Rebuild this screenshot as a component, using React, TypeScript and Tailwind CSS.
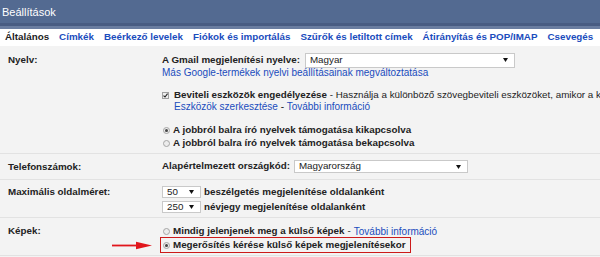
const tabs = [
  "Címkék",
  "Beérkező levelek",
  "Fiókok és importálás",
  "Szűrők és letiltott címek",
  "Átirányítás és POP/IMAP",
  "Csevegés",
];

function Radio({ checked = false }: { checked?: boolean }) {
  return (
    <span className="mr-[3px] ml-[1px] flex h-[7px] w-[7px] shrink-0 items-center justify-center rounded-full border border-[#a5a5a5] bg-[#ececec]">
      {checked && <span className="h-[3px] w-[3px] rounded-full bg-[#444]" />}
    </span>
  );
}

function Checkbox() {
  return (
    <span className="flex h-[7px] w-[7px] shrink-0 items-center justify-center border border-[#a0a0a0] bg-[#eee]">
      <svg width="5" height="5" viewBox="0 0 5 5">
        <path d="M0.5 2.6 L2 4 L4.6 0.6" fill="none" stroke="#222" strokeWidth="1.1" />
      </svg>
    </span>
  );
}

function Select({ value, className }: { value: string; className: string }) {
  return (
    <div
      className={`flex items-center justify-between border border-[#c9c9c9] bg-white pr-[6px] pl-[4px] font-normal ${className}`}
    >
      <span>{value}</span>
      <svg width="5" height="4" viewBox="0 0 5 4">
        <path d="M0 0h5L2.5 4z" fill="#111" />
      </svg>
    </div>
  );
}

export default function App() {
  return (
    <div className="h-[257px] w-[600px] overflow-hidden bg-[#f3f3f3] font-['Liberation_Sans',Arial,sans-serif] text-[9.8px] whitespace-nowrap text-[#222]">
      {/* Header */}
      <div className="h-[23px] bg-[#536a91] pt-[4px] pl-[2px] text-[11px] text-white">Beállítások</div>
      <div className="h-[3px] bg-[#485c82]" />
      <div className="h-[3px] bg-[#6a7da0]" />

      {/* Tabs */}
      <div className="flex h-[17px] items-center gap-[10px] bg-white pl-[5px] font-bold text-[#1a4cbd]">
        <span className="text-[#222]">Általános</span>
        {tabs.map((t) => (
          <span key={t}>{t}</span>
        ))}
      </div>

      {/* Nyelv */}
      <div className="flex border-b border-[#e2e2e2] pt-[7px] pb-[3px]">
        <div className="w-[162px] shrink-0 pl-[8px] leading-[14px] font-bold">Nyelv:</div>
        <div className="flex flex-col">
          <div className="flex h-[14px] items-center gap-[5px] font-bold">
            A Gmail megjelenítési nyelve:
            <Select value="Magyar" className="h-[15px] w-[210px]" />
          </div>
          <div className="h-[12px] text-[10px] leading-[12px] text-[#1a4cbd]">
            Más Google-termékek nyelvi beállításainak megváltoztatása
          </div>
          <div className="mt-[10px] flex h-[12px] items-center gap-[5px]">
            <Checkbox />
            <span>
              <b>Beviteli eszközök engedélyezése</b> - Használja a különböző szövegbeviteli eszközöket, amikor a
              különböző nyelveken gépel
            </span>
          </div>
          <div className="h-[12px] pl-[12px] text-[10px] leading-[12px] text-[#1a4cbd]">
            Eszközök szerkesztése <span className="text-[#222]">-</span> További információ
          </div>
          <div className="mt-[11px] flex h-[13px] items-center font-bold">
            <Radio checked />A jobbról balra író nyelvek támogatása kikapcsolva
          </div>
          <div className="flex h-[13px] items-center font-bold">
            <Radio />A jobbról balra író nyelvek támogatása bekapcsolva
          </div>
        </div>
      </div>

      {/* Telefonszámok */}
      <div className="flex border-b border-[#e2e2e2] pt-[6px] pb-[6px]">
        <div className="w-[162px] shrink-0 pl-[8px] leading-[13px] font-bold">Telefonszámok:</div>
        <div className="flex h-[13px] items-center gap-[4px] font-bold">
          Alapértelmezett országkód:
          <Select value="Magyarország" className="h-[13px] w-[174px]" />
        </div>
      </div>

      {/* Maximális oldalméret */}
      <div className="flex border-b border-[#e2e2e2] pt-[6px] pb-[4px]">
        <div className="w-[162px] shrink-0 pl-[8px] leading-[12px] font-bold">Maximális oldalméret:</div>
        <div className="flex flex-col gap-[3px] font-bold">
          <div className="flex h-[12px] items-center gap-[3px]">
            <Select value="50" className="h-[12px] w-[39px]" />
            beszélgetés megjelenítése oldalanként
          </div>
          <div className="flex h-[12px] items-center gap-[3px]">
            <Select value="250" className="h-[12px] w-[39px]" />
            névjegy megjelenítése oldalanként
          </div>
        </div>
      </div>

      {/* Képek */}
      <div className="flex border-b border-[#e2e2e2] pt-[7px] pb-[2px]">
        <div className="flex w-[162px] shrink-0 flex-col">
          <div className="pl-[8px] leading-[12px] font-bold">Képek:</div>
          <div className="flex h-[16px] items-center justify-end pr-[10px]">
            <svg width="40" height="9" viewBox="0 0 40 9">
              <path d="M0 3.6h26v1.8H0z" fill="#e1161c" />
              <path d="M24 0.8 L40 4.5 L24 8.2z" fill="#e1161c" />
            </svg>
          </div>
        </div>
        <div className="flex flex-col">
          <div className="flex h-[12px] items-center">
            <Radio />
            <b>Mindig jelenjenek meg a külső képek</b>
            <span className="ml-[3px]">-</span>
            <span className="ml-[3px] text-[10px] text-[#1a4cbd]">További információ</span>
          </div>
          <div className="-ml-[2px] flex h-[16px] w-[251px] items-center border border-[#cc1a1a] pl-[1px] font-bold">
            <Radio checked />
            Megerősítés kérése külső képek megjelenítésekor
          </div>
        </div>
      </div>
    </div>
  );
}
